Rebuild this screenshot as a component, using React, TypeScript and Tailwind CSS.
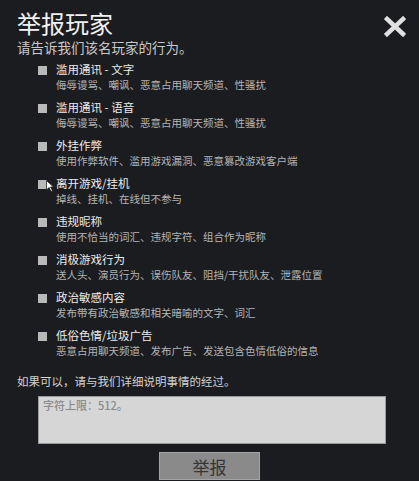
import { useState } from "react";

const reasons = [
  { title: "滥用通讯 - 文字", desc: "侮辱谩骂、嘲讽、恶意占用聊天频道、性骚扰" },
  { title: "滥用通讯 - 语音", desc: "侮辱谩骂、嘲讽、恶意占用聊天频道、性骚扰" },
  { title: "外挂作弊", desc: "使用作弊软件、滥用游戏漏洞、恶意篡改游戏客户端" },
  { title: "离开游戏/挂机", desc: "掉线、挂机、在线但不参与" },
  { title: "违规昵称", desc: "使用不恰当的词汇、违规字符、组合作为昵称" },
  { title: "消极游戏行为", desc: "送人头、演员行为、误伤队友、阻挡/干扰队友、泄露位置" },
  { title: "政治敏感内容", desc: "发布带有政治敏感和相关暗喻的文字、词汇" },
  { title: "低俗色情/垃圾广告", desc: "恶意占用聊天频道、发布广告、发送包含色情低俗的信息" },
];

export default function App() {
  const [checked, setChecked] = useState<boolean[]>(reasons.map(() => false));
  const [note, setNote] = useState("");

  const toggle = (i: number) => setChecked((c) => c.map((v, j) => (j === i ? !v : v)));

  return (
    <div
      className="relative h-[481px] w-[419px] overflow-hidden bg-[#1b1c20] text-[#e4e4e4]"
      style={{ fontFamily: '"Noto Sans CJK SC", "Noto Sans", sans-serif' }}
    >
      <div className="flex items-start justify-between pl-[17px] pr-[12px] pt-[8px]">
        <h1 className="text-[24px] leading-[30px] text-[#f2f2f2]">举报玩家</h1>
        <button className="mt-[6px] flex h-[24px] w-[24px] items-center justify-center">
          <svg width="22" height="21" viewBox="0 0 22 21">
            <path d="M3 3 L19 18 M19 3 L3 18" stroke="#e0e0e0" strokeWidth="4.5" strokeLinecap="square" />
          </svg>
        </button>
      </div>
      <p className="pl-[17px] text-[13.5px] leading-[18px] text-[#c9c9c9]">请告诉我们该名玩家的行为。</p>

      <ul className="mt-[6px] flex flex-col gap-[8px] pl-[38px]">
        {reasons.map((r, i) => (
          <li key={r.title} className="flex cursor-pointer gap-[9px]" onClick={() => toggle(i)}>
            <span
              className={`mt-[4px] h-[9px] w-[9px] shrink-0 ${checked[i] ? "bg-[#e8e8e8]" : "bg-[#b9b9b9]"}`}
            />
            <div className="flex flex-col">
              <span className="text-[11.5px] leading-[15px] text-[#ececec]">{r.title}</span>
              <span className="text-[10.5px] leading-[15px] text-[#b4b4b4]">{r.desc}</span>
            </div>
          </li>
        ))}
      </ul>

      <p className="mt-[15px] pl-[17px] text-[11.5px] leading-[16px] text-[#d2d2d2]">如果可以，请与我们详细说明事情的经过。</p>

      <div className="mt-[7px] pl-[38px] pr-[33px]">
        <textarea
          value={note}
          onChange={(e) => setNote(e.target.value)}
          maxLength={512}
          placeholder="字符上限：512。"
          className="block h-[48px] w-full resize-none border border-[#9a9a9a] bg-[#d6d6d6] px-[4px] py-[1px] text-[11px] font-medium leading-[15px] text-[#333] placeholder:text-[#8a8a8a] outline-none"
        />
      </div>

      <div className="mt-[8px] flex justify-center">
        <button className="h-[28px] w-[101px] border border-[#a4a4a4] bg-[#8a8a8a] text-[17px] leading-none text-[#363636]">
          举报
        </button>
      </div>

      {/* mouse pointer */}
      <svg className="pointer-events-none absolute left-[46px] top-[180px]" width="8" height="12" viewBox="0 0 8 12">
        <path d="M0.5 0.5 L0.5 10 L3 7.5 L5 11.5 L6.5 10.8 L4.5 7 L7.5 7 Z" fill="#ffffff" stroke="#222" strokeWidth="0.8" />
      </svg>
    </div>
  );
}
